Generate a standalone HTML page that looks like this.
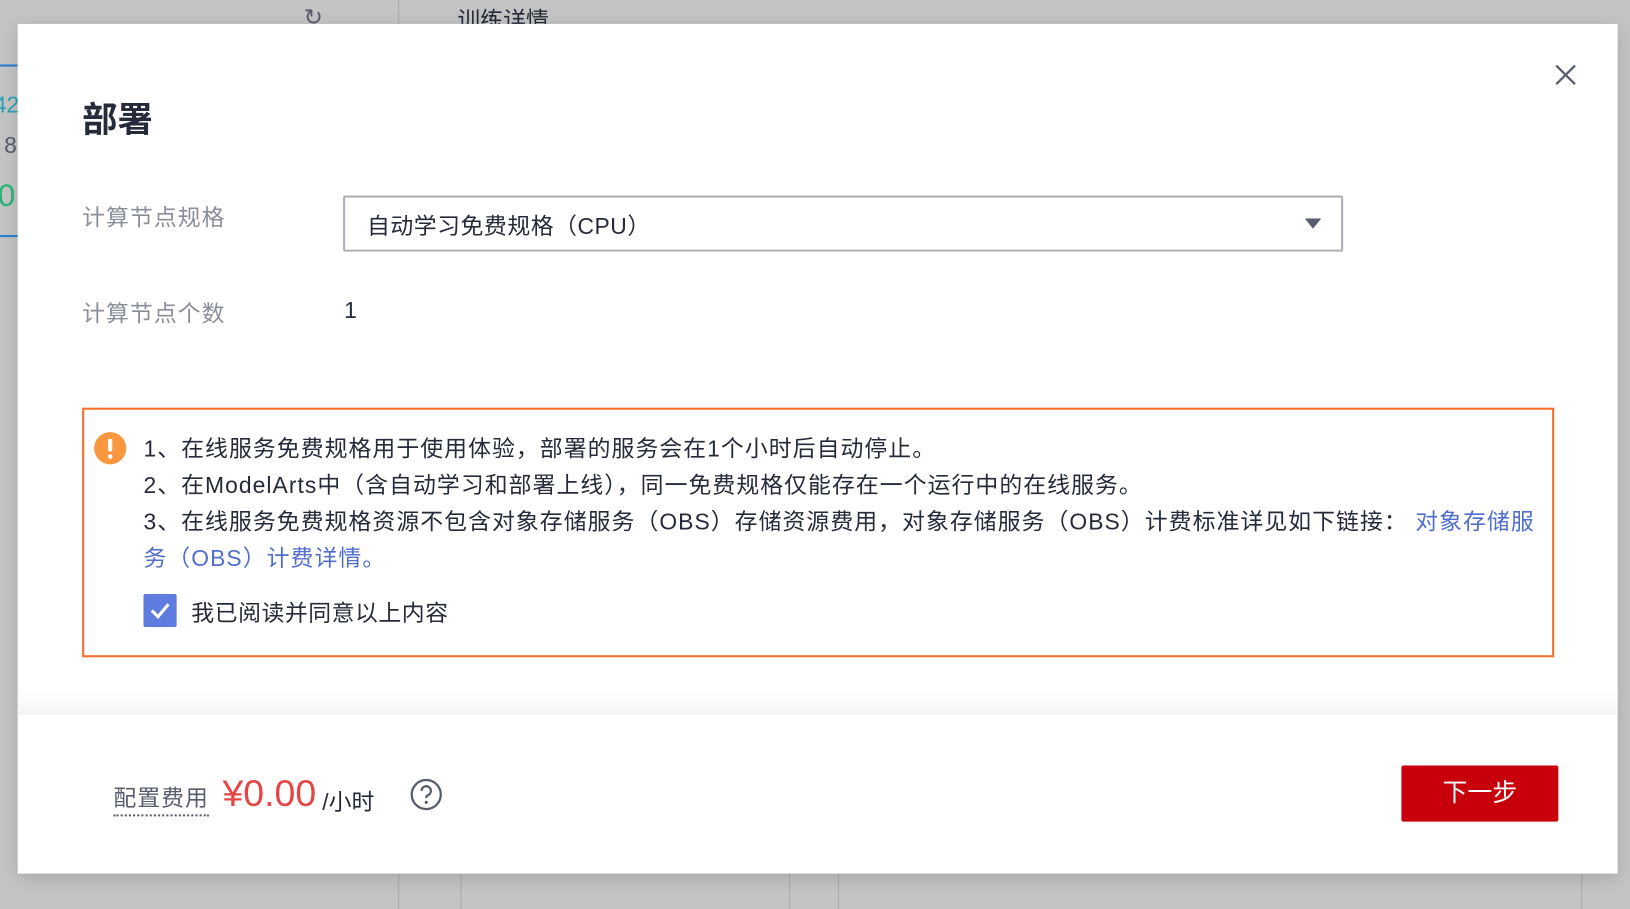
<!DOCTYPE html>
<html><head><meta charset="utf-8"><style>
*{margin:0;padding:0;box-sizing:border-box}
html,body{width:1630px;height:909px;overflow:hidden;background:#c4c4c4}
#w{position:absolute;left:0;top:0;width:1568px;height:874px;transform:scale(1.0396,1.04);transform-origin:0 0;font-family:"Liberation Sans","Noto Sans CJK SC",sans-serif;color:#252b3a}
.a{position:absolute;white-space:nowrap}
.modal{position:absolute;left:17px;top:23px;width:1539px;height:817px;background:#fff;box-shadow:0 4px 16px rgba(0,0,0,.15)}
.lbl{font-size:22px;color:#8a8e99;letter-spacing:1px}
.t{font-size:22px;line-height:35px;letter-spacing:1px}
</style></head><body><div id="w">
<div class="a" style="left:440px;top:2px;font-size:22px;color:#252b3a">训练详情</div>
<div class="a" style="left:292px;top:4px;font-size:22px;color:#575d6c">↻</div>
<div class="a" style="left:383px;top:0;width:1px;height:23px;background:#aaa"></div>
<div class="a" style="left:383px;top:840px;width:1px;height:34px;background:#aaa"></div>
<div class="a" style="left:443px;top:840px;width:1px;height:34px;background:#aaa"></div>
<div class="a" style="left:759px;top:840px;width:1px;height:34px;background:#aaa"></div>
<div class="a" style="left:806px;top:840px;width:1px;height:34px;background:#aaa"></div>
<div class="a" style="left:1521px;top:840px;width:1px;height:34px;background:#aaa"></div>
<div class="a" style="left:0;top:62px;width:17px;height:2px;background:#2a7fd1"></div>
<div class="a" style="left:0;top:226px;width:17px;height:2px;background:#2a7fd1"></div>
<div class="a" style="left:-6px;top:88px;font-size:22px;color:#2ba3b5">42</div>
<div class="a" style="left:4px;top:127px;font-size:22px;color:#575d6c">8</div>
<div class="a" style="left:-2px;top:172px;font-size:30px;color:#2bb57a">0</div>

<div class="modal"></div>
<svg class="a" style="left:1495px;top:61px" width="22" height="22"><path d="M2 2L20 20M20 2L2 20" stroke="#575d6c" stroke-width="2.2"/></svg>
<div class="a" style="left:79px;top:88px;font-size:34px;font-weight:bold;color:#252b3a">部署</div>
<div class="a lbl" style="left:79px;top:192px">计算节点规格</div>
<div class="a" style="left:330px;top:188px;width:962px;height:54px;border:2px solid #adb0b8;border-radius:2px"></div>
<div class="a" style="left:353px;top:200px;font-size:22px;letter-spacing:.5px">自动学习免费规格（CPU）</div>
<svg class="a" style="left:1255px;top:210px" width="16" height="10"><path d="M0 0H16L8 10Z" fill="#575d6c"/></svg>
<div class="a lbl" style="left:79px;top:284px">计算节点个数</div>
<div class="a" style="left:331px;top:286px;font-size:22px">1</div>

<div class="a" style="left:79px;top:392px;width:1416px;height:240px;border:2px solid #f66f2a"></div>
<svg class="a" style="left:90px;top:415px" width="32" height="32"><circle cx="16" cy="16" r="15.5" fill="#fa9841"/><rect x="14" y="7" width="4" height="12" rx="1.5" fill="#fff"/><circle cx="16" cy="24" r="2.2" fill="#fff"/></svg>
<div class="a t" style="left:138px;top:414px">1、在线服务免费规格用于使用体验，部署的服务会在1个小时后自动停止。<br>2、在ModelArts中（含自动学习和部署上线），同一免费规格仅能存在一个运行中的在线服务。<br>3、在线服务免费规格资源不包含对象存储服务（OBS）存储资源费用，对象存储服务（OBS）计费标准详见如下链接：<span style="color:#526ecc"> 对象存储服</span><br><span style="color:#526ecc">务（OBS）计费详情。</span></div>
<svg class="a" style="left:138px;top:571px" width="32" height="32"><rect width="32" height="32" rx="2" fill="#5e7ce0"/><path d="M8 16L14 22L24 10" stroke="#fff" stroke-width="3" fill="none"/></svg>
<div class="a" style="left:184px;top:572px;font-size:22px;letter-spacing:.5px">我已阅读并同意以上内容</div>

<div class="a" style="left:17px;top:665px;width:1539px;height:22px;background:linear-gradient(#fff,#f5f5f6)"></div>
<div class="a" style="left:17px;top:686px;width:1539px;height:1px;background:#eeeef0"></div>
<div class="a" style="left:109px;top:753px;font-size:22px;color:#575d6c;border-bottom:2px dotted #575d6c;line-height:30px;letter-spacing:1px">配置费用</div>
<div class="a" style="left:214px;top:742px;font-size:36px;color:#e54545">¥0.00</div>
<div class="a" style="left:310px;top:754px;font-size:22px">/小时</div>
<svg class="a" style="left:394px;top:748px" width="32" height="32"><circle cx="16" cy="16" r="14" fill="none" stroke="#575d6c" stroke-width="2.2"/><path d="M11.5 12.5a4.5 4.5 0 1 1 6 4.2c-1.2.5-1.5 1.2-1.5 2.6" fill="none" stroke="#575d6c" stroke-width="2.2"/><circle cx="16" cy="23.5" r="1.5" fill="#575d6c"/></svg>
<div class="a" style="left:1348px;top:736px;width:151px;height:54px;background:#c7000b;border-radius:2px;color:#fff;font-size:24px;text-align:center;line-height:54px">下一步</div>
</div></body></html>
